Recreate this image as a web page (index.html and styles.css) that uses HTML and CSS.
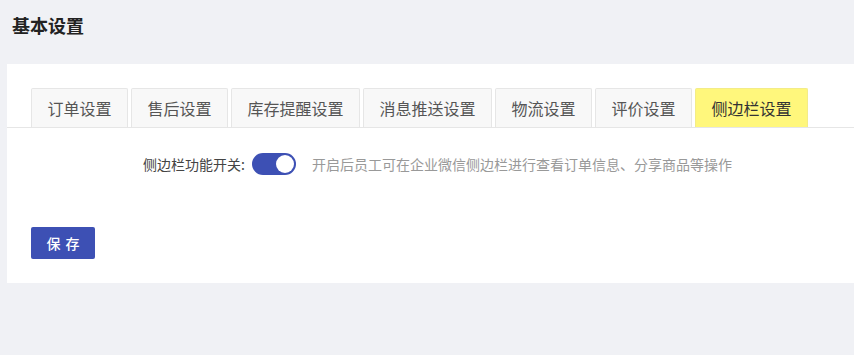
FILE: index.html
```html
<!DOCTYPE html>
<html lang="zh-CN">
<head>
    <meta charset="UTF-8">
    <meta name="viewport" content="width=device-width, initial-scale=1.0">
    <title>基本设置</title>
    <link rel="stylesheet" href="styles.css">
</head>
<body>
    <div class="page-header">
        <h1>基本设置</h1>
    </div>

    <div class="card">
        <!-- 设置分类 -->
        <ul class="tabs">
            <li class="tab">订单设置</li>
            <li class="tab">售后设置</li>
            <li class="tab">库存提醒设置</li>
            <li class="tab">消息推送设置</li>
            <li class="tab">物流设置</li>
            <li class="tab">评价设置</li>
            <li class="tab active">侧边栏设置</li>
        </ul>

        <div class="form-row">
            <label class="form-label">侧边栏功能开关:</label>
            <span class="switch on"><span class="knob"></span></span>
            <span class="form-tip">开启后员工可在企业微信侧边栏进行查看订单信息、分享商品等操作</span>
        </div>

        <div class="actions">
            <button class="btn-primary">保 存</button>
        </div>
    </div>
</body>
</html>
```

FILE: styles.css
```css
body {
    margin: 0;
    background: #f0f1f5;
    font-family: "Noto Sans CJK SC", "Noto Sans", sans-serif;
    color: #333;
}
.page-header {
    height: 64px;
    box-sizing: border-box;
    padding: 14px 12px 0;
}
.page-header h1 {
    margin: 0;
    font-size: 18px;
    line-height: 22px;
    font-weight: bold;
    color: #222;
}
.card {
    margin-left: 7px;
    background: #fff;
    height: 219px;
    box-sizing: border-box;
    padding-top: 24px;
}
.tabs {
    display: flex;
    gap: 3px;
    margin: 0;
    padding: 0 0 0 24px;
    list-style: none;
    border-bottom: 1px solid #e6e6e6;
}
.tab {
    height: 38px;
    line-height: 38px;
    padding: 0 15.5px;
    font-size: 16px;
    color: #555;
    background: #f8f8f8;
    border: 1px solid #e6e6e6;
    border-bottom: none;
    border-radius: 2px 2px 0 0;
}
.tab.active {
    background: #fff77c;
    border-color: #f3ec88;
    color: #333;
}
.form-row {
    display: flex;
    align-items: center;
    margin-top: 25px;
    height: 22px;
}
.form-label {
    width: 238px;
    text-align: right;
    font-size: 14px;
    color: #444;
}
.switch {
    position: relative;
    width: 44px;
    height: 22px;
    margin-left: 7px;
    border-radius: 11px;
    background: #ccc;
}
.switch.on {
    background: #3d50b4;
}
.knob {
    position: absolute;
    top: 2px;
    left: 2px;
    width: 18px;
    height: 18px;
    border-radius: 50%;
    background: #fff;
}
.switch.on .knob {
    left: 24px;
}
.form-tip {
    margin-left: 16px;
    font-size: 14px;
    color: #999;
}
.actions {
    padding: 52px 0 0 24px;
}
.btn-primary {
    width: 64px;
    height: 32px;
    border: none;
    border-radius: 2px;
    background: #3d50b4;
    color: #fff;
    font-family: inherit;
    font-size: 14px;
    font-weight: 500;
    letter-spacing: 1px;
    text-indent: 1px;
}
```
